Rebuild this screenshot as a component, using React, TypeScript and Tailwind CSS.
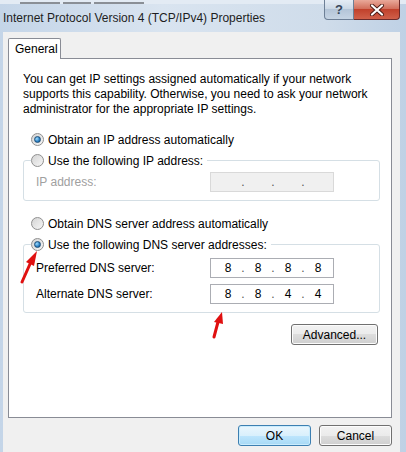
import React from "react";

const font = { fontFamily: '"Liberation Sans", Arial, sans-serif' };

const Radio: React.FC<{ checked?: boolean }> = ({ checked }) => (
  <span className="flex items-center justify-center w-[13px] h-[13px] rounded-full border border-[#8f8f8f] bg-[linear-gradient(135deg,#d4d4d4,#f6f6f6)] shrink-0">
    {checked && (
      <span className="w-[7px] h-[7px] rounded-full border border-[#1d4e78] bg-[radial-gradient(circle_at_35%_35%,#9fdcff,#2a7fc2_60%,#124a7a)]" />
    )}
  </span>
);

const IpBox: React.FC<{ parts?: string[]; disabled?: boolean }> = ({ parts, disabled }) => (
  <div
    className={`w-[124px] h-[20px] border flex items-center pl-[6px] ${
      disabled ? "bg-[#f0f0f0] border-[#d9d9d9]" : "bg-white border-[#abadb3]"
    }`}
  >
    {[0, 1, 2, 3].map((i) => (
      <React.Fragment key={i}>
        <span className="w-[22px] text-center text-[12px] text-black">{parts ? parts[i] : ""}</span>
        {i < 3 && <span className="w-[8px] text-center text-[12px] text-[#555]">.</span>}
      </React.Fragment>
    ))}
  </div>
);

const Button: React.FC<{ label: string; w: string; primary?: boolean }> = ({ label, w, primary }) => (
  <div
    className={`${w} h-[21px] rounded-[3px] border flex items-center justify-center text-[12px] text-black ${
      primary
        ? "border-[#3c7fb1] bg-[linear-gradient(#eaf6fd,#d9f0fc_50%,#bee6fd_50%,#a7d9f5)] shadow-[inset_0_0_0_1px_#c9ecfd]"
        : "border-[#707070] bg-[linear-gradient(#f2f2f2,#ebebeb_50%,#dddddd_50%,#cfcfcf)] shadow-[inset_0_0_0_1px_#fcfcfc]"
    }`}
  >
    {label}
  </div>
);

const App: React.FC = () => {
  return (
    <div
      className="relative w-[406px] h-[452px] overflow-hidden bg-[linear-gradient(90deg,#c4d5e8,#d9e4f0_40%,#cfdcea_80%,#bfd1e5)]"
      style={font}
    >
      {/* edge of the window behind */}
      <div className="h-[4px] flex items-end gap-[3px] pl-[20px] bg-[#e3ebf4]">
        <div className="w-[40px] h-[2px] bg-[#8a8f96]" />
        <div className="w-[28px] h-[2px] bg-[#8a8f96]" />
        <div className="w-[50px] h-[2px] bg-[#8a8f96]" />
      </div>

      {/* Title bar */}
      <div className="h-[28px] flex items-start justify-between pl-[3px]">
        <div className="pt-[5px] text-[12px] text-[#1e1e1e]">Internet Protocol Version 4 (TCP/IPv4) Properties</div>
        <div className="flex -mt-[4px] mr-[6px]">
          <div className="w-[30px] h-[20px] rounded-bl-[4px] border border-t-0 border-[#6d7f96] bg-[linear-gradient(#e4ecf5,#c9d6e4_50%,#b4c5d8_50%,#c6d4e4)] flex items-center justify-center text-[13px] font-bold text-[#37465a]">
            ?
          </div>
          <div className="w-[46px] h-[20px] rounded-br-[4px] border border-t-0 border-l-0 border-[#6b2a2a] bg-[linear-gradient(#e9a99a,#d2705d_45%,#c1412c_50%,#d0604a)] flex items-center justify-center">
            <svg width="16" height="12" viewBox="0 0 16 12">
              <path d="M3 1.5 L13 10.5 M13 1.5 L3 10.5" stroke="#4a1a14" strokeWidth="4" strokeLinecap="round" />
              <path d="M3 1.5 L13 10.5 M13 1.5 L3 10.5" stroke="#ffffff" strokeWidth="2.2" strokeLinecap="round" />
            </svg>
          </div>
        </div>
      </div>

      {/* Dialog body */}
      <div className="ml-[3px] mr-[6px] h-[420px] bg-[#f0f0f0] pt-[6px] pl-[5px] pr-[8px]">
        {/* Tab */}
        <div className="relative z-10 -mb-[1px] w-[53px] h-[21px] bg-white border border-b-0 border-[#898c95] rounded-t-[2px] flex items-center pl-[6px] text-[12px] text-black">
          General
        </div>

        {/* Panel */}
        <div className="w-[384px] h-[360px] bg-white border border-[#898c95] pt-[13px] pl-[14px] pr-[11px] text-[12px] text-black">
          <p className="leading-[15px]">
            You can get IP settings assigned automatically if your network
            <br />
            supports this capability. Otherwise, you need to ask your network
            <br />
            administrator for the appropriate IP settings.
          </p>

          <div className="mt-[15px] ml-[8px] h-[15px] flex items-center gap-[4px]">
            <Radio checked />
            <span>Obtain an IP address automatically</span>
          </div>

          <fieldset className="mt-[6px] border border-[#d5dfe5] rounded-[3px] pb-[8px]">
            <legend className="ml-[7px] pr-[4px] h-[15px] flex items-center gap-[4px]">
              <Radio />
              <span>Use the following IP address:</span>
            </legend>
            <div className="pt-[4px] pl-[12px] flex items-center justify-between h-[24px]">
              <span className="text-[#a0a0a0]">IP address:</span>
              <div className="mr-[45px]">
                <IpBox disabled />
              </div>
            </div>
          </fieldset>

          <div className="mt-[15px] ml-[8px] h-[15px] flex items-center gap-[4px]">
            <Radio />
            <span>Obtain DNS server address automatically</span>
          </div>

          <fieldset className="mt-[6px] border border-[#d5dfe5] rounded-[3px] pb-[8px]">
            <legend className="ml-[7px] pr-[4px] h-[15px] flex items-center gap-[4px]">
              <Radio checked />
              <span>Use the following DNS server addresses:</span>
            </legend>
            <div className="pt-[6px] pl-[12px] flex flex-col gap-[6px]">
              <div className="flex items-center justify-between h-[20px]">
                <span>Preferred DNS server:</span>
                <div className="mr-[45px]">
                  <IpBox parts={["8", "8", "8", "8"]} />
                </div>
              </div>
              <div className="flex items-center justify-between h-[20px]">
                <span>Alternate DNS server:</span>
                <div className="mr-[45px]">
                  <IpBox parts={["8", "8", "4", "4"]} />
                </div>
              </div>
            </div>
          </fieldset>

          <div className="mt-[11px] flex justify-end pr-[2px]">
            <Button label="Advanced..." w="w-[87px]" />
          </div>
        </div>

        {/* Footer buttons */}
        <div className="mt-[7px] flex justify-end gap-[8px]">
          <Button label="OK" w="w-[73px]" primary />
          <Button label="Cancel" w="w-[73px]" />
        </div>
      </div>

      {/* Red annotation arrows */}
      <svg className="absolute left-0 top-0 pointer-events-none" width="406" height="452" viewBox="0 0 406 452">
        <path d="M22 282 L30 264" stroke="#e01010" strokeWidth="3" strokeLinecap="round" />
        <path d="M37 251 L26 262 L34 266 Z" fill="#e01010" />
        <path d="M214 337 L218 322" stroke="#e01010" strokeWidth="3" strokeLinecap="round" />
        <path d="M222 312 L214 322 L223 324 Z" fill="#e01010" />
      </svg>
    </div>
  );
};

export default App;
